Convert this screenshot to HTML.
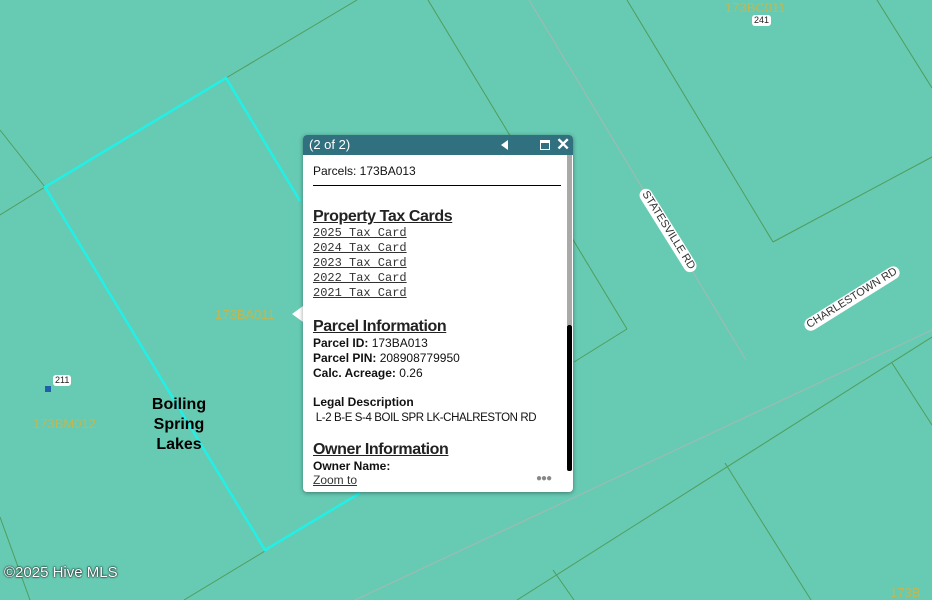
<!DOCTYPE html>
<html><head><meta charset="utf-8"><style>
body{margin:0;width:932px;height:600px;overflow:hidden;background:#67cab3;font-family:"Liberation Sans",sans-serif;position:relative}
svg{position:absolute;left:0;top:0}
.lbl{position:absolute;color:#d2b441;font-size:13px;opacity:.85}
.badge{position:absolute;background:#fff;border-radius:3px;font-size:9px;padding:0 2px;line-height:11px;color:#222}
.road{position:absolute;background:#fff;color:#333;font-size:11px;line-height:13px;padding:0 3px;border-radius:7px;white-space:nowrap;transform-origin:center}
#pop{position:absolute;left:303px;top:135px;width:270px;height:357px;background:#fff;border-radius:4px;box-shadow:0 1px 4px rgba(0,0,0,.4);overflow:hidden}
#hd{height:20px;background:#31707f;color:#fff;font-size:13px;line-height:20px;padding-left:6px;position:relative}
#ct{padding:0 12px 0 10px;font-size:12px;color:#111}
.h{font-size:16px;font-weight:600;text-decoration:underline;color:#222;margin:0;letter-spacing:-0.4px}
.m a{display:block;font-family:"Liberation Mono",monospace;font-size:12px;color:#333;text-decoration:underline;line-height:15px;height:15px}
b{font-weight:600}
</style></head><body>
<svg width="932" height="600">
<g stroke="#4f9e5c" stroke-width="1" fill="none">
<line x1="0" y1="130" x2="45" y2="187"/><line x1="45" y1="187" x2="0" y2="215"/>
<line x1="226" y1="78" x2="357" y2="0"/>
<line x1="0" y1="517" x2="30" y2="600"/>
<line x1="265" y1="551" x2="184" y2="600"/>
<line x1="428" y1="0" x2="627" y2="329"/><line x1="627" y1="329" x2="574" y2="362"/>
<line x1="627" y1="0" x2="773" y2="242"/><line x1="773" y1="242" x2="932" y2="157"/>
<line x1="877" y1="0" x2="932" y2="88"/>
<line x1="932" y1="337" x2="517" y2="600"/>
<line x1="725" y1="463" x2="811" y2="600"/>
<line x1="892" y1="363" x2="932" y2="425"/>
<line x1="553" y1="570" x2="574" y2="600"/>
</g>
<g stroke="#9bbcb3" stroke-width="1.2" fill="none">
<line x1="529" y1="0" x2="746" y2="360"/>
<line x1="932" y1="330" x2="355" y2="600"/>
</g>
<polyline points="300,201 226,78 45,187 265,550 360,493" stroke="#22f0e6" stroke-width="2.5" fill="none"/>
</svg>
<div class="lbl" style="left:215px;top:307px">173BA011</div>
<div class="lbl" style="left:33px;top:416px">173BM012</div>
<div class="lbl" style="left:725px;top:0px">173BC011</div>
<div class="lbl" style="left:890px;top:585px">173B</div>
<div class="badge" style="left:752px;top:15px">241</div>
<div class="badge" style="left:53px;top:375px">211</div>
<div style="position:absolute;left:45px;top:386px;width:6px;height:6px;background:#1f5fa8"></div>
<div style="position:absolute;left:140px;top:395px;width:78px;text-align:center;font-weight:bold;font-size:16px;line-height:20px;color:#000">Boiling Spring Lakes</div>
<div style="position:absolute;left:4px;top:564px;font-size:15px;color:#fff;text-shadow:0 0 2px #000,0 0 1px #000">©2025 Hive MLS</div>
<div class="road" style="left:620px;top:224px;transform:rotate(58deg)">STATESVILLE RD</div>
<div class="road" style="left:797px;top:292px;transform:rotate(-32deg)">CHARLESTOWN RD</div>
<div style="position:absolute;left:292px;top:306px;width:0;height:0;border-top:8px solid transparent;border-bottom:8px solid transparent;border-right:11px solid #fff"></div>
<div id="pop">
<div id="hd">(2 of 2)
<span style="position:absolute;left:198px;top:5px;width:0;height:0;border-top:5px solid transparent;border-bottom:5px solid transparent;border-right:7px solid #fff"></span>
<span style="position:absolute;left:237px;top:5px;width:8px;height:6px;border:1.5px solid #fff;border-top-width:3px"></span>
<span style="position:absolute;left:253px;top:0;font-size:17px;font-weight:bold">✕</span>
</div>
<div style="position:absolute;left:264px;top:20px;width:5px;height:170px;background:#a9a9a9"></div>
<div style="position:absolute;left:264px;top:190px;width:5px;height:146px;background:#000;border-radius:2px"></div>
<div id="ct">
<div style="padding-top:9px;line-height:14px">Parcels: 173BA013</div>
<div style="border-bottom:1.5px solid #000;margin-top:7px;width:248px"></div>
<div class="h" style="margin-top:22px;line-height:18px">Property Tax Cards</div>
<div class="m"><a>2025 Tax Card</a><a>2024 Tax Card</a><a>2023 Tax Card</a><a>2022 Tax Card</a><a>2021 Tax Card</a></div>
<div class="h" style="margin-top:17px;line-height:18px">Parcel Information</div>
<div style="line-height:15px"><b>Parcel ID:</b> 173BA013<br><b>Parcel PIN:</b> 208908779950<br><b>Calc. Acreage:</b> 0.26</div>
<div style="margin-top:14px;line-height:15px;white-space:nowrap"><span style="font-weight:600">Legal Description</span><br><span style="font-size:11.5px;letter-spacing:-0.4px">&nbsp;L-2 B-E S-4 BOIL SPR LK-CHALRESTON RD</span></div>
<div class="h" style="margin-top:15px;line-height:18px">Owner Information</div>
<div style="line-height:15px"><b>Owner Name:</b></div>
<div style="line-height:13px;color:#333;text-decoration:underline">Zoom to</div>
</div>
<div style="position:absolute;left:233px;top:338px;color:#888;font-size:10px;letter-spacing:-1px">●●●</div>
</div>
</body></html>
